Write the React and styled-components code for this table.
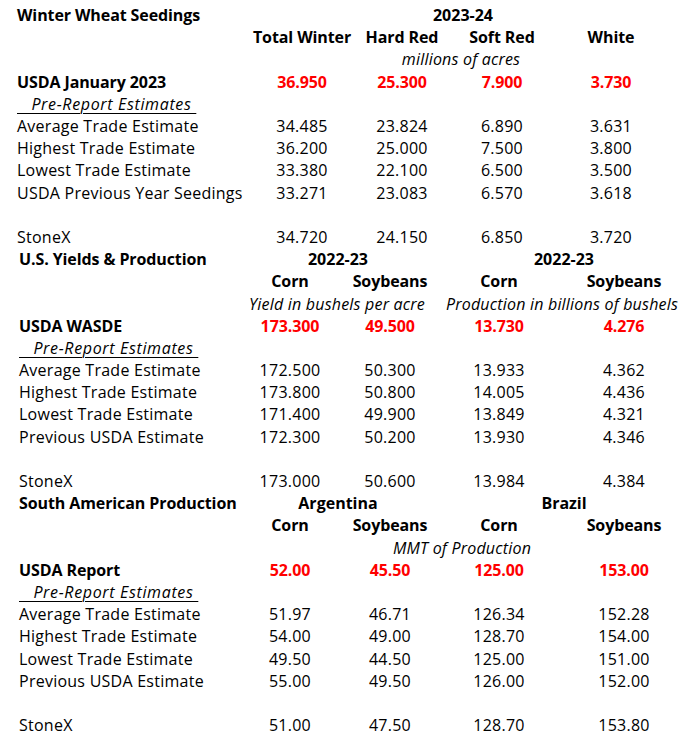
import React from "react";
import styled, { createGlobalStyle } from "styled-components";

const Global = createGlobalStyle`
  html, body { margin: 0; padding: 0; background: #fff; }
  body { font-family: "Open Sans", "Lato", sans-serif; color: #000; }
`;

const Page = styled.div`
  width: 691px;
  padding-top: 4px;
  font-size: 16px;
`;

const Section = styled.div`
  display: grid;
  grid-template-columns: ${(p) => p.$cols};
  grid-auto-rows: 22.2px;
  align-items: center;
  padding-left: ${(p) => p.$left}px;
`;

const Label = styled.div`
  grid-column: 1;
  white-space: nowrap;
  font-weight: ${(p) => (p.$bold ? 700 : 400)};
  letter-spacing: ${(p) => (p.$bold ? -0.1 : 0.25)}px;
`;

const Sub = styled.div`
  grid-column: 1;
  white-space: pre;
  font-style: italic;
  letter-spacing: 0.65px;
  text-decoration: underline;
  text-decoration-thickness: 1px;
  text-underline-offset: 3px;
`;

const Cell = styled.div`
  text-align: center;
  white-space: nowrap;
  font-weight: ${(p) => (p.$bold ? 700 : 400)};
  letter-spacing: ${(p) => (p.$bold ? -0.1 : 0.25)}px;
  color: ${(p) => (p.$red ? "#ff0000" : "#000")};
`;

const Span = styled.div`
  grid-column: ${(p) => p.$span};
  text-align: center;
  white-space: nowrap;
  font-weight: ${(p) => (p.$italic ? 400 : 700)};
  font-style: ${(p) => (p.$italic ? "italic" : "normal")};
  letter-spacing: ${(p) => (p.$italic ? 0.2 : 0)}px;
  transform: translateX(${(p) => p.$shift || 0}px);
`;

const Blank = styled.div`
  grid-column: 1 / -1;
`;

const sections = [
  {
    title: "Winter Wheat Seedings",
    left: 17,
    cols: "235px 100px 100px 100px 118px",
    spans: [{ text: "2023-24", span: "2 / 6", shift: 2 }],
    headers: ["Total Winter", "Hard Red", "Soft Red", "White"],
    unit: { text: "millions of acres", span: "2 / 6", shift: 0 },
    usda: { label: "USDA January 2023", values: ["36.950", "25.300", "7.900", "3.730"] },
    rows: [
      ["Average Trade Estimate", "34.485", "23.824", "6.890", "3.631"],
      ["Highest Trade Estimate", "36.200", "25.000", "7.500", "3.800"],
      ["Lowest Trade Estimate", "33.380", "22.100", "6.500", "3.500"],
      ["USDA Previous Year Seedings", "33.271", "23.083", "6.570", "3.618"],
    ],
    stonex: ["34.720", "24.150", "6.850", "3.720"],
  },
  {
    title: "U.S. Yields & Production",
    left: 19,
    cols: "221px 100px 100px 118px 132px",
    spans: [
      { text: "2022-23", span: "2 / 4", shift: -2 },
      { text: "2022-23", span: "4 / 6", shift: -1 },
    ],
    headers: ["Corn", "Soybeans", "Corn", "Soybeans"],
    units: [
      { text: "Yield in bushels per acre", span: "2 / 4", shift: -3 },
      { text: "Production in billions of bushels", span: "4 / 6", shift: -3 },
    ],
    usda: { label: "USDA WASDE", values: ["173.300", "49.500", "13.730", "4.276"] },
    rows: [
      ["Average Trade Estimate", "172.500", "50.300", "13.933", "4.362"],
      ["Highest Trade Estimate", "173.800", "50.800", "14.005", "4.436"],
      ["Lowest Trade Estimate", "171.400", "49.900", "13.849", "4.321"],
      ["Previous USDA Estimate", "172.300", "50.200", "13.930", "4.346"],
    ],
    stonex: ["173.000", "50.600", "13.984", "4.384"],
  },
  {
    title: "South American Production",
    left: 19,
    cols: "221px 100px 100px 118px 132px",
    spans: [
      { text: "Argentina", span: "2 / 4", shift: -2 },
      { text: "Brazil", span: "4 / 6", shift: -1 },
    ],
    headers: ["Corn", "Soybeans", "Corn", "Soybeans"],
    unit: { text: "MMT of Production", span: "2 / 6", shift: -3 },
    usda: { label: "USDA Report", values: ["52.00", "45.50", "125.00", "153.00"] },
    rows: [
      ["Average Trade Estimate", "51.97", "46.71", "126.34", "152.28"],
      ["Highest Trade Estimate", "54.00", "49.00", "128.70", "154.00"],
      ["Lowest Trade Estimate", "49.50", "44.50", "125.00", "151.00"],
      ["Previous USDA Estimate", "55.00", "49.50", "126.00", "152.00"],
    ],
    stonex: ["51.00", "47.50", "128.70", "153.80"],
  },
];

function Block({ s }) {
  const units = s.units || [s.unit];
  return (
    <Section $cols={s.cols} $left={s.left}>
      <Label $bold>{s.title}</Label>
      {s.spans.map((sp, i) => (
        <Span key={i} $span={sp.span} $shift={sp.shift}>{sp.text}</Span>
      ))}
      <Label />
      {s.headers.map((h, i) => (
        <Cell key={i} $bold>{h}</Cell>
      ))}
      <Label />
      {units.map((u, i) => (
        <Span key={i} $span={u.span} $shift={u.shift} $italic>{u.text}</Span>
      ))}
      <Label $bold>{s.usda.label}</Label>
      {s.usda.values.map((v, i) => (
        <Cell key={i} $bold $red>{v}</Cell>
      ))}
      <Sub>{"\u00a0\u00a0\u00a0Pre-Report Estimates\u00a0"}</Sub>
      {s.rows.map((r, i) => (
        <React.Fragment key={i}>
          <Label>{r[0]}</Label>
          {r.slice(1).map((v, j) => (
            <Cell key={j}>{v}</Cell>
          ))}
        </React.Fragment>
      ))}
      <Blank />
      <Label>StoneX</Label>
      {s.stonex.map((v, i) => (
        <Cell key={i}>{v}</Cell>
      ))}
    </Section>
  );
}

export default function App() {
  return (
    <>
      <Global />
      <Page>
        {sections.map((s, i) => (
          <Block key={i} s={s} />
        ))}
      </Page>
    </>
  );
}
